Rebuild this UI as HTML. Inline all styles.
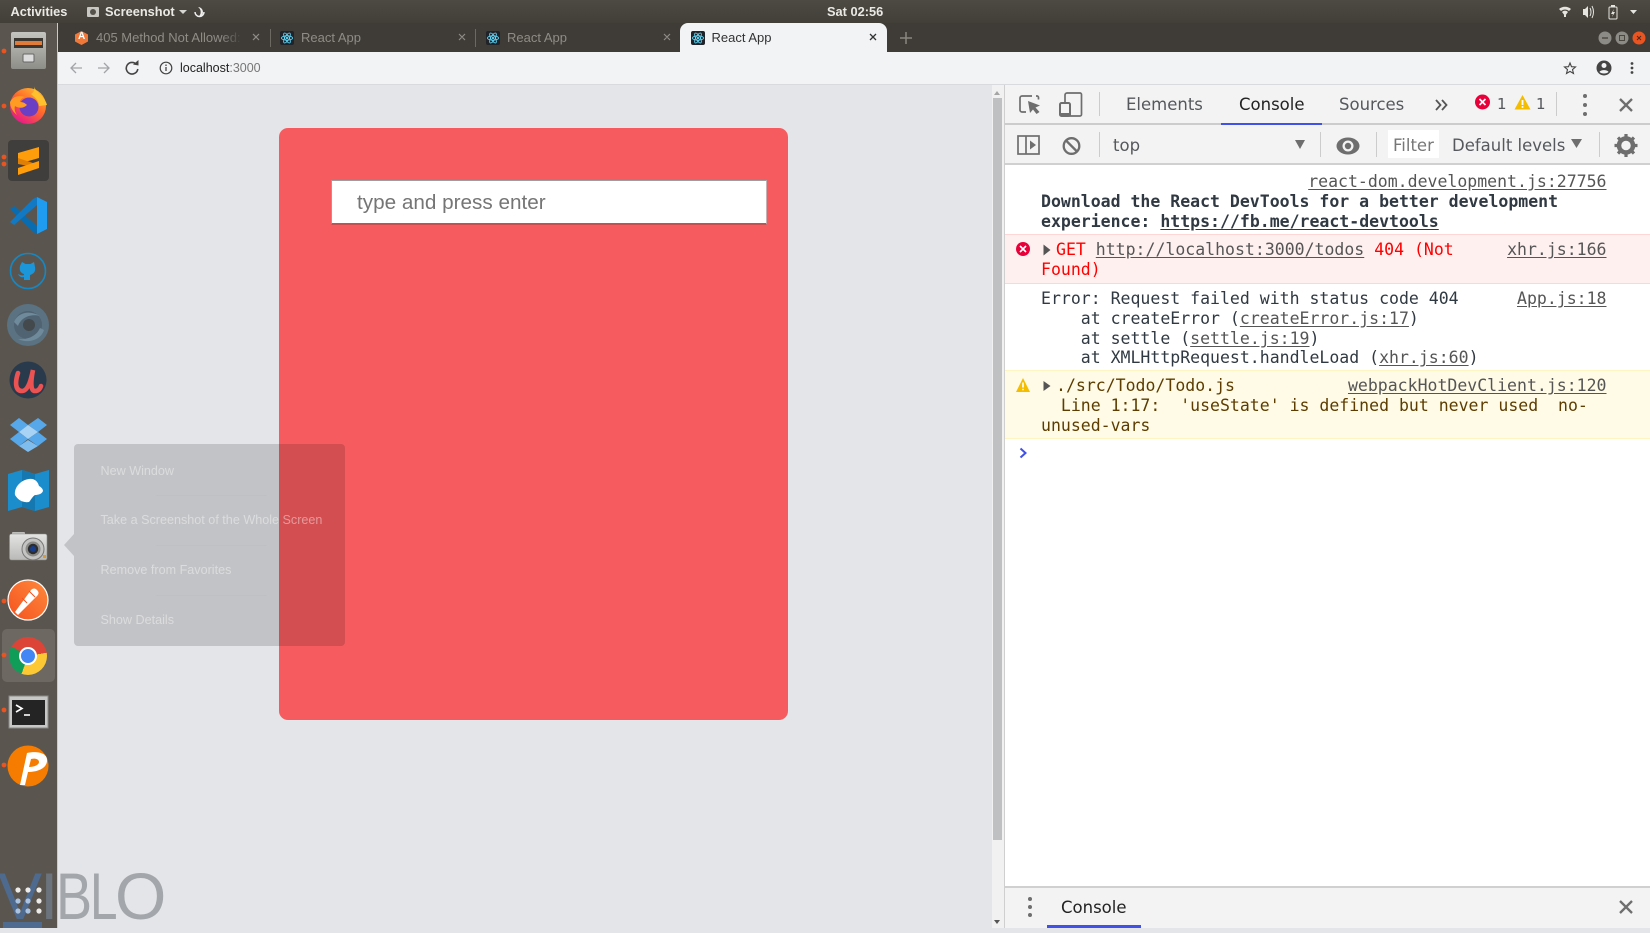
<!DOCTYPE html>
<html><head><meta charset="utf-8"><title>React App</title>
<style>
html,body{margin:0;padding:0;width:1650px;height:928px;overflow:hidden;background:#e3e5e8}
div{position:absolute;box-sizing:border-box}
.t{position:absolute;white-space:pre;height:20px;line-height:20px;font-family:"Liberation Sans",sans-serif}
.m{font-family:"DejaVu Sans Mono",monospace;font-size:16.52px;color:#303942}
.m u{text-underline-offset:2px}
.r{right:43.5px;color:#555}
.tb{font-size:12.8px;color:#ebe9e4;font-weight:bold}
.tab{font-size:13px;color:#8f8c86}
.dt{font-size:18px;color:#55585c;font-family:"DejaVu Sans",sans-serif}
.mn{font-size:12.6px;color:rgba(255,255,255,.42)}
.wm{font-size:66px;height:66px;line-height:66px;transform-origin:left center}
</style></head><body>
<!-- base chrome -->
<div style="left:0;top:0;width:1650px;height:23px;background:linear-gradient(#4d4a43,#423f39)"></div>
<div style="left:0;top:23px;width:1650px;height:29px;background:#3f3c37"></div>
<div style="left:58px;top:52px;width:1592px;height:32px;background:#f2f3f5"></div>
<div style="left:58px;top:84px;width:1592px;height:1px;background:#d8dadd"></div>
<div style="left:0;top:23px;width:57px;height:905px;background:#5a564f"></div>
<div style="left:57px;top:23px;width:1px;height:905px;background:#c9c9c6"></div>
<!-- active tab -->
<div style="left:680px;top:23px;width:207px;height:29px;background:#f2f3f5;border-radius:8px 8px 0 0"></div>
<!-- page -->
<div style="left:58px;top:85px;width:934px;height:843px;background:#e3e5e8"></div>
<div style="left:279px;top:128px;width:509px;height:592px;background:#f65c5f;border-radius:9px"></div>
<div style="left:331px;top:180px;width:436px;height:45px;background:#fff;border:1px solid #9a9fa3;border-bottom:2px solid #c84f50;border-right-color:#c9b0b2"></div>
<div class="t" style="left:357px;top:192.500px;font-size:20.7px;color:#757575">type and press enter</div>
<!-- scrollbar -->
<div style="left:992px;top:85px;width:12px;height:843px;background:#f1f1f1"></div>
<div style="left:993px;top:98px;width:9px;height:742px;background:#bfc0c1"></div>
<!-- devtools -->
<div style="left:1004px;top:85px;width:646px;height:843px;background:#fff;border-left:1px solid #cfcfcf"></div>
<div style="left:1005px;top:85px;width:645px;height:38px;background:#f3f3f3"></div>
<div style="left:1005px;top:123px;width:645px;height:2px;background:#cccccc"></div>
<div style="left:1221px;top:123px;width:101px;height:3px;background:#3f51e8"></div>
<div style="left:1005px;top:125px;width:645px;height:39px;background:#f3f3f3"></div>
<div style="left:1005px;top:163px;width:645px;height:2px;background:#d0d0d0"></div>
<div style="left:1388px;top:130px;width:51px;height:28px;background:#fff"></div>
<!-- separators -->
<div style="left:1099px;top:92px;width:1px;height:24px;background:#ccc"></div>
<div style="left:1556px;top:92px;width:1px;height:24px;background:#ccc"></div>
<div style="left:1099px;top:132px;width:1px;height:25px;background:#ccc"></div>
<div style="left:1320px;top:132px;width:1px;height:25px;background:#ccc"></div>
<div style="left:1376px;top:132px;width:1px;height:25px;background:#ccc"></div>
<div style="left:1599px;top:132px;width:1px;height:25px;background:#ccc"></div>
<!-- console rows -->
<div style="left:1005px;top:234px;width:645px;height:50px;background:#fff0f0;border-top:1px solid #ffd6d6;border-bottom:1px solid #ffd6d6"></div>
<div style="left:1005px;top:370px;width:645px;height:69px;background:#fffbe6;border-top:1px solid #fff5c2;border-bottom:1px solid #fff5c2"></div>
<!-- drawer -->
<div style="left:1005px;top:886px;width:645px;height:42px;background:#f3f3f3;border-top:2px solid #d0d0d0"></div>
<div style="left:1047px;top:925px;width:94px;height:3px;background:#3f51e8"></div>
<!-- chrome logo -->
<div style="left:2px;top:629px;width:53px;height:53px;background:#6d6962;border-radius:5px"></div>
<div style="left:9px;top:637px;width:38px;height:38px;border-radius:50%;background:conic-gradient(#db4437 0deg 80deg,#fcc934 80deg 200deg,#0f9d58 200deg 300deg,#db4437 300deg)"></div>
<div style="left:19px;top:647px;width:18px;height:18px;border-radius:50%;background:#4285f4;border:2px solid #fff"></div>

<!-- icons -->
<svg width="1650" height="928" viewBox="0 0 1650 928" style="position:absolute;left:0;top:0" xmlns="http://www.w3.org/2000/svg">
<defs>
<linearGradient id="fc" x1="0" y1="0" x2="0" y2="1"><stop offset="0" stop-color="#c4c4c0"/><stop offset="1" stop-color="#8e8e88"/></linearGradient>
<linearGradient id="ff" x1="1" y1="0" x2=".3" y2="1"><stop offset="0" stop-color="#ffcf2e"/><stop offset=".5" stop-color="#ff6b2a"/><stop offset="1" stop-color="#e6198a"/></linearGradient>
<linearGradient id="pm" x1="1" y1="0" x2="0" y2="1"><stop offset="0" stop-color="#ff8a3c"/><stop offset="1" stop-color="#f4511e"/></linearGradient>
<linearGradient id="cam" x1="0" y1="0" x2="0" y2="1"><stop offset="0" stop-color="#e4e4e2"/><stop offset="1" stop-color="#b9b9b7"/></linearGradient>
<symbol id="rx" viewBox="0 0 14 14"><rect width="14" height="14" rx="2" fill="#20232a"/><g fill="none" stroke="#61dafb" stroke-width=".8"><ellipse cx="7" cy="7" rx="5.6" ry="2.2"/><ellipse cx="7" cy="7" rx="5.6" ry="2.2" transform="rotate(60 7 7)"/><ellipse cx="7" cy="7" rx="5.6" ry="2.2" transform="rotate(120 7 7)"/></g><circle cx="7" cy="7" r="1.1" fill="#61dafb"/></symbol>
</defs>
<!-- files -->
<rect x="11" y="32" width="35" height="37" rx="2" fill="url(#fc)"/>
<rect x="14" y="38" width="29" height="10" fill="#3a3733"/><rect x="15" y="41" width="27" height="4" fill="#e07b39"/>
<rect x="23" y="54" width="11" height="8" rx="1" fill="#ddd" stroke="#666"/>
<!-- firefox -->
<circle cx="28" cy="106" r="18" fill="url(#ff)"/>
<path d="M34 86c1 6 11 10 13 19l-8 1c0-6-5-9-8-12 3-2 4-4 3-8z" fill="#ffc22e"/>
<circle cx="29" cy="107" r="9.500" fill="#6b3fc4"/>
<path d="M10 102c3-6 9-7 15-5-3 1-5 3-5 5 3 0 5 1 7 3-4 4-9 3-12 1-1 3 0 6 2 9-4-3-7-8-7-13z" fill="#ff9a22"/>
<!-- sublime -->
<rect x="8" y="140" width="41" height="41" rx="4" fill="#403e3c"/>
<polygon points="18,153 39,147 39,158 18,164" fill="#ff9d0a"/>
<polygon points="18,158 39,165 39,168 18,164" fill="#e07f05"/>
<polygon points="18,168 39,161 39,168 18,175" fill="#ff9d0a"/>
<!-- vscode -->
<path d="M10 209l4-3 23 20v8l-4-2z" fill="#0a6cb0"/><path d="M10 222l23-23 4-2v8l-23 20z" fill="#1279c4"/><path d="M37 197l10 5v27l-10 5z" fill="#1f9cf0"/>
<!-- github -->
<circle cx="28" cy="271" r="17.500" fill="none" stroke="#1588c4" stroke-width="1.600"/>
<path d="M22 262l3.500 2h5l3.500-2 1 5c1 5-2 7-5 8v5h-6v-3c-3 1-5-1-6-3 2 1 4 2 6 1v-1c-3-1-5-3-4-8z" fill="#1c96d8"/>
<!-- swirl -->
<circle cx="28" cy="325" r="21" fill="#5a7282"/><circle cx="28" cy="325" r="14" fill="#4f6372"/><path d="M14 322c4-10 16-12 26-6-8-2-18 0-22 10z" fill="#6f8a9b"/><path d="M44 330c-3 10-16 14-26 9 8 1 18-2 22-11z" fill="#6f8a9b"/><circle cx="29" cy="325" r="6" fill="#43494c"/>
<!-- udemy -->
<circle cx="28" cy="380" r="18.500" fill="#2a3a4d"/><path d="M18 373C15 382 15 391 22 391C28 391 31 380 33 370C31 380 30 391 35 391C38 391 40 389 41 386" fill="none" stroke="#ec5252" stroke-width="4.600" stroke-linecap="round"/>
<!-- dropbox -->
<polygon points="19,418 28,425 19,432 10,425" fill="#56a8ea"/><polygon points="38,418 47,425 38,432 28,425" fill="#56a8ea"/>
<polygon points="19,432 28,425 38,432 28,439" fill="#a8d3f4"/>
<polygon points="10,439 19,432 28,439 19,446" fill="#56a8ea"/><polygon points="47,439 38,432 28,439 38,446" fill="#56a8ea"/>
<polygon points="19,446 28,440 38,446 28,452" fill="#7fbdee"/>
<!-- map -->
<polygon points="8,474 22,470 35,474 49,470 49,507 35,511 22,507 8,511" fill="#1c8dcc"/>
<polygon points="22,470 35,474 35,511 22,507" fill="#1678b0"/>
<path d="M15 495c-1-8 6-15 14-16 6-1 9 3 10 7 2 1 4 3 4 5-1 3-5 4-8 4-3 2-4 5-6 7-6 1-11-2-14-7z" fill="#fff"/>
<!-- camera -->
<rect x="12" y="532" width="13" height="4" rx="1" fill="#bdbdbb"/>
<rect x="9.500" y="534" width="37.500" height="26" rx="2" fill="url(#cam)" stroke="#8a8a88" stroke-width=".6"/>
<circle cx="33" cy="549" r="11" fill="#c4c4c2" stroke="#777"/><circle cx="33" cy="549" r="7.500" fill="#8a8a88"/><circle cx="33" cy="549" r="5.200" fill="#2c2c2c"/><circle cx="33" cy="549" r="3" fill="#153c8a"/><rect x="43" y="555" width="3" height="3" fill="#e09a2a"/>
<!-- postman -->
<circle cx="28" cy="600" r="20" fill="url(#pm)" stroke="#fff" stroke-width="1.200"/>
<path d="M15 612l3 3 19-19c2-2 2-4 0-6-2-2-4-2-6 0z" fill="#fff"/><path d="M29 591l6 6M22 598l5 5" stroke="#f4511e"/>
<!-- terminal -->
<rect x="9" y="696" width="39" height="32" fill="#c7c7c5" stroke="#8a8a88"/><rect x="12" y="700" width="33" height="25" fill="#242424"/>
<path d="M16 705l6 3.500-6 3.500" fill="none" stroke="#fff" stroke-width="1.600"/><path d="M24 715h6" stroke="#fff" stroke-width="1.600"/>
<!-- P -->
<circle cx="28" cy="766" r="20.500" fill="#f57c00"/>
<path d="M20 785l7-32c8-2 19-1 20 6 1 9-9 13-19 13l-3 13z M31 759l-2 8c5 0 10-2 10-5 0-3-4-4-8-3z" fill="#fff" fill-rule="evenodd"/>
<!-- dock dots -->
<g fill="#e95420"><circle cx="4" cy="51" r="2.400"/><circle cx="4" cy="106" r="2.400"/><circle cx="4" cy="157" r="2.400"/><circle cx="4" cy="164" r="2.400"/><circle cx="4" cy="601" r="2.400"/><circle cx="4" cy="655" r="2.400"/><circle cx="4" cy="710" r="2.400"/><circle cx="4" cy="765" r="2.400"/></g>
<!-- topbar icon -->
<rect x="87" y="7" width="12" height="10" rx="1" fill="#c9c7c2"/><circle cx="93" cy="12" r="3" fill="#55524c"/>
<polygon points="179,10 187,10 183,14" fill="#d8d6d1"/>
<path d="M198 7a5 5 0 0 1 0 10a6 6 0 0 0 0-10z" fill="#eee"/><circle cx="199.500" cy="12" r="4.500" fill="none" stroke="#eee" stroke-width="1.500" stroke-dasharray="14 20"/>
<!-- tray -->
<path d="M1559 9a9 9 0 0 1 12 0l-2 2a6 6 0 0 0-8 0zM1562 12a4 4 0 0 1 6 0l-3 4z" fill="#e6e4df"/><rect x="1564" y="15" width="2" height="2" fill="#e6e4df"/>
<path d="M1583 9h2l3-3v12l-3-3h-2z" fill="#e6e4df"/><path d="M1590 8q2 4 0 8M1592 6q3 6 0 12" fill="none" stroke="#e6e4df"/>
<rect x="1609" y="7" width="8" height="12" rx="1" fill="none" stroke="#e6e4df"/><rect x="1611" y="5" width="4" height="2" fill="#e6e4df"/><path d="M1614 9l-3 5h2l-1 3 3-5h-2z" fill="#e6e4df"/>
<polygon points="1630,10 1637,10 1633.500,14" fill="#e6e4df"/>
<!-- favicons -->
<path d="M81.500 31l6.500 3.500v7l-6.500 3.500-6.500-3.500v-7z" fill="#f0793a"/>
<use href="#rx" x="280" y="31" width="14" height="14"/><use href="#rx" x="486" y="31" width="14" height="14"/><use href="#rx" x="691" y="31" width="14" height="14"/>
<g stroke="#8f8c86" stroke-width="1.200"><path d="M253 34l6 6M259 34l-6 6M459 34l6 6M465 34l-6 6M664 34l6 6M670 34l-6 6"/></g>
<path d="M270.500 29v18M475.500 29v18" stroke="#6c6962"/>
<path d="M870 34l6 6M876 34l-6 6" stroke="#333" stroke-width="1.300"/>
<path d="M906 32v12M900 38h12" stroke="#8a8781" stroke-width="1.500"/>
<circle cx="1605" cy="38" r="6.500" fill="#8d8b85"/><circle cx="1622" cy="38" r="6.500" fill="#8d8b85"/><circle cx="1639" cy="38" r="6.500" fill="#e95420"/>
<path d="M1602 38h6" stroke="#4a4740" stroke-width="1.400"/><rect x="1619.500" y="35.500" width="5" height="5" fill="none" stroke="#4a4740"/><path d="M1637 36l4 4M1641 36l-4 4" stroke="#4a2a20"/>
<!-- nav -->
<path d="M82 68H71M76 63L71 68l5 5M98 68h11M104 63l5 5-5 5" fill="none" stroke="#a2a4a7" stroke-width="1.300"/>
<path d="M136.500 64.500a5.800 5.800 0 1 0 1.300 4.500" fill="none" stroke="#444" stroke-width="1.600"/><polygon points="133,64.500 138.500,60 138.500,65.500" fill="#444"/>
<circle cx="166" cy="68" r="5.800" fill="none" stroke="#444" stroke-width="1.200"/><path d="M166 67v4M166 64.500v1.500" stroke="#444" stroke-width="1.300"/>
<path d="M1570 63l1.500 3.700 4 .3-3 2.600 1 3.900-3.500-2.100-3.500 2.100 1-3.900-3-2.600 4-.3z" fill="none" stroke="#444" stroke-width="1.100"/>
<circle cx="1604" cy="68" r="7.500" fill="#444"/><circle cx="1604" cy="65.500" r="2.500" fill="#f2f3f5"/><path d="M1599.500 72c1-2.500 8-2.500 9 0-2 2-7 2-9 0z" fill="#f2f3f5"/>
<g fill="#444"><circle cx="1632" cy="63.500" r="1.400"/><circle cx="1632" cy="68" r="1.400"/><circle cx="1632" cy="72.500" r="1.400"/></g>
<!-- scrollbar arrows -->
<polygon points="994,95 1000,95 997,91" fill="#a5a5a5"/><polygon points="994,920 1000,920 997,924" fill="#555"/>
<!-- devtools row1 -->
<path d="M1032 96h-10a2 2 0 0 0-2 2v12a2 2 0 0 0 2 2h4M1036 96h1a1.500 1.500 0 0 1 1.500 1.500v2" fill="none" stroke="#6e6e6e" stroke-width="1.700"/>
<polygon points="1028,101 1040,105.500 1035.500,107.500 1039.500,112 1036.500,114 1033,109.500 1030,113" fill="#6e6e6e"/>
<path d="M1065 104v-9a2 2 0 0 1 2-2h13a1.500 1.500 0 0 1 1.500 1.500v20a1.500 1.500 0 0 1-1.500 1.500h-11" fill="none" stroke="#6e6e6e" stroke-width="1.700"/>
<rect x="1060" y="103" width="10" height="13" rx="1.500" fill="none" stroke="#6e6e6e" stroke-width="2"/><rect x="1060" y="113" width="10" height="3" fill="#6e6e6e"/>
<path d="M1436 100l4.500 5-4.500 5M1442 100l4.500 5-4.500 5" fill="none" stroke="#555" stroke-width="1.800"/>
<circle cx="1482.500" cy="102" r="7.500" fill="#e8003a"/><path d="M1479.500 99l6 6M1485.500 99l-6 6" stroke="#fff" stroke-width="1.700"/>
<polygon points="1522.500,95 1530.500,109.500 1514.500,109.500" fill="#f4bd00"/><path d="M1522.500 100v5" stroke="#fff" stroke-width="1.800"/><circle cx="1522.500" cy="107" r="1" fill="#fff"/>
<g fill="#6e6e6e"><circle cx="1585" cy="96" r="2"/><circle cx="1585" cy="105" r="2"/><circle cx="1585" cy="114" r="2"/></g>
<path d="M1620 99l12 12M1632 99l-12 12" stroke="#6e6e6e" stroke-width="2.300"/>
<!-- devtools row2 -->
<rect x="1018" y="136" width="21" height="18" fill="none" stroke="#6e6e6e" stroke-width="1.700"/><path d="M1026 136v18" stroke="#6e6e6e" stroke-width="1.700"/><polygon points="1030,140.500 1036,145 1030,149.500" fill="#6e6e6e"/>
<circle cx="1071.500" cy="146" r="7.800" fill="none" stroke="#6e6e6e" stroke-width="2.300"/><path d="M1066 140.500l11 11" stroke="#6e6e6e" stroke-width="2.300"/>
<polygon points="1295,140 1305,140 1300,149" fill="#6e6e6e"/>
<ellipse cx="1348" cy="146" rx="11.500" ry="8.500" fill="#6e6e6e"/><circle cx="1348" cy="146" r="5.500" fill="#f3f3f3"/><circle cx="1348" cy="146" r="3.200" fill="#6e6e6e"/>
<polygon points="1571,139 1582,139 1576.500,148" fill="#6e6e6e"/>
<circle cx="1626" cy="145.500" r="7" fill="none" stroke="#6e6e6e" stroke-width="4.500"/>
<path d="M1626 134v23M1614.500 145.500h23M1618 137.500l16 16M1634 137.500l-16 16" stroke="#6e6e6e" stroke-width="3.200" stroke-dasharray="3.500 16 3.500"/>
<!-- console icons -->
<circle cx="1023" cy="249" r="7" fill="#e8003a"/><path d="M1020 246l6 6M1026 246l-6 6" stroke="#fff" stroke-width="1.600"/>
<polygon points="1043.500,244.500 1050.500,250 1043.500,255.500" fill="#555"/>
<polygon points="1023,378 1030,392 1016,392" fill="#f4bd00"/><path d="M1023 382.500v5" stroke="#fff" stroke-width="1.700"/><circle cx="1023" cy="389.500" r=".9" fill="#fff"/>
<polygon points="1043.500,381 1050.500,386 1043.500,391" fill="#555"/>
<path d="M1020.500 448.500l5 4.500-5 4.500" fill="none" stroke="#3f51e8" stroke-width="2"/>
<!-- drawer -->
<g fill="#6e6e6e"><circle cx="1030" cy="899" r="2"/><circle cx="1030" cy="907" r="2"/><circle cx="1030" cy="915" r="2"/></g>
<path d="M1620 901l12 12M1632 901l-12 12" stroke="#6e6e6e" stroke-width="2.300"/>
<!-- apps bar bottom -->
<rect x="3" y="922" width="39" height="6" fill="#4f6c90"/>
</svg>

<!-- watermark -->
<div class="t wm" style="left:-2px;top:863px;color:#4e6a8f">V</div>
<div class="t wm" style="left:40px;top:863px;color:rgba(115,125,140,.75)">I</div>
<div class="t wm" style="left:56px;top:863px;color:#a3a6ab;transform:scaleX(.82)">B</div>
<div class="t wm" style="left:90px;top:863px;color:#a3a6ab;transform:scaleX(.75)">L</div>
<div class="t wm" style="left:115px;top:863px;color:#a3a6ab">O</div>
<svg width="60" height="50" viewBox="0 0 60 50" style="position:absolute;left:0;top:878px" xmlns="http://www.w3.org/2000/svg">
<g fill="#ecebe7"><circle cx="18" cy="12" r="2.600"/><circle cx="28" cy="12" r="2.600"/><circle cx="39" cy="12" r="2.600"/><circle cx="39" cy="23" r="2.600"/><circle cx="39" cy="33" r="2.600"/></g>
<g fill="#a9c3e0"><circle cx="18" cy="23" r="2.600"/><circle cx="28" cy="23" r="2.600"/><circle cx="18" cy="33" r="2.600"/><circle cx="28" cy="33" r="2.600"/></g>
</svg>

<!-- context menu -->
<div style="left:74px;top:444px;width:271px;height:202px;background:rgba(0,0,0,.145);border-radius:4px"></div>
<div style="left:64px;top:534px;width:0;height:0;border-top:11px solid transparent;border-bottom:11px solid transparent;border-right:10px solid rgba(0,0,0,.145)"></div>
<div style="left:156px;top:495px;width:111px;height:1px;background:rgba(0,0,0,.012)"></div>
<div style="left:156px;top:545px;width:111px;height:1px;background:rgba(0,0,0,.012)"></div>
<div style="left:156px;top:595px;width:111px;height:1px;background:rgba(0,0,0,.012)"></div>
<div class="t mn" style="left:100.500px;top:461px">New Window</div>
<div class="t mn" style="left:100.500px;top:510px">Take a Screenshot of the Whole Screen</div>
<div class="t mn" style="left:100.500px;top:560px">Remove from Favorites</div>
<div class="t mn" style="left:100.500px;top:610px">Show Details</div>

<!-- top bar text -->
<div class="t tb" style="left:10.500px;top:2px">Activities</div>
<div class="t tb" style="left:105px;top:2px">Screenshot</div>
<div class="t tb" style="left:827px;top:2px">Sat 02:56</div>
<!-- tabs -->
<div class="t tab" style="left:96px;top:27.500px;width:147px;overflow:hidden;-webkit-mask-image:linear-gradient(90deg,#000 85%,transparent 100%);mask-image:linear-gradient(90deg,#000 85%,transparent 100%)">405 Method Not Allowed:</div>
<div class="t" style="left:78px;top:27px;font-size:10px;font-weight:bold;color:#fff">A</div>
<div class="t tab" style="left:301px;top:27.500px">React App</div>
<div class="t tab" style="left:507px;top:27.500px">React App</div>
<div class="t tab" style="left:711.500px;top:27.500px;color:#333">React App</div>
<div class="t" style="left:180px;top:58px;font-size:12.5px;color:#222">localhost<span style="color:#777">:3000</span></div>

<!-- devtools text -->
<div class="t dt" style="left:1126px;top:95px;font-size:16.500px">Elements</div>
<div class="t dt" style="left:1239px;top:95px;font-size:16.500px;color:#222">Console</div>
<div class="t dt" style="left:1339px;top:95px;font-size:16.500px">Sources</div>
<div class="t dt" style="left:1497px;top:94px;font-size:15px">1</div>
<div class="t dt" style="left:1536px;top:94px;font-size:15px">1</div>
<div class="t dt" style="left:1113px;top:136px;font-size:16.500px">top</div>
<div class="t dt" style="left:1393px;top:136px;font-size:16.500px;width:45px;overflow:hidden;color:#777">Filter</div>
<div class="t dt" style="left:1452px;top:136px;font-size:16.500px">Default levels</div>
<div class="t dt" style="left:1061px;top:898px;font-size:16.500px;color:#222">Console</div>

<!-- console text -->
<div class="t m r" style="top:172px"><u>react-dom.development.js:27756</u></div>
<div class="t m" style="left:1041px;top:192px;font-weight:bold">Download the React DevTools for a better development</div>
<div class="t m" style="left:1041px;top:212px;font-weight:bold">experience: <u>https://fb.me/react-devtools</u></div>
<div class="t m" style="left:1056px;top:240px;color:#f00">GET <u style="color:#555">http://localhost:3000/todos</u> 404 (Not</div>
<div class="t m" style="left:1041px;top:260px;color:#f00">Found)</div>
<div class="t m r" style="top:240px"><u>xhr.js:166</u></div>
<div class="t m" style="left:1041px;top:289px">Error: Request failed with status code 404</div>
<div class="t m r" style="top:289px"><u>App.js:18</u></div>
<div class="t m" style="left:1041px;top:309px">    at createError (<u style="color:#555">createError.js:17</u>)</div>
<div class="t m" style="left:1041px;top:329px">    at settle (<u style="color:#555">settle.js:19</u>)</div>
<div class="t m" style="left:1041px;top:348px">    at XMLHttpRequest.handleLoad (<u style="color:#555">xhr.js:60</u>)</div>
<div class="t m" style="left:1056px;top:376px;color:#5c3c00">./src/Todo/Todo.js</div>
<div class="t m r" style="top:376px"><u>webpackHotDevClient.js:120</u></div>
<div class="t m" style="left:1041px;top:396px;color:#5c3c00">  Line 1:17:  'useState' is defined but never used  no-</div>
<div class="t m" style="left:1041px;top:416px;color:#5c3c00">unused-vars</div>
</body></html>
